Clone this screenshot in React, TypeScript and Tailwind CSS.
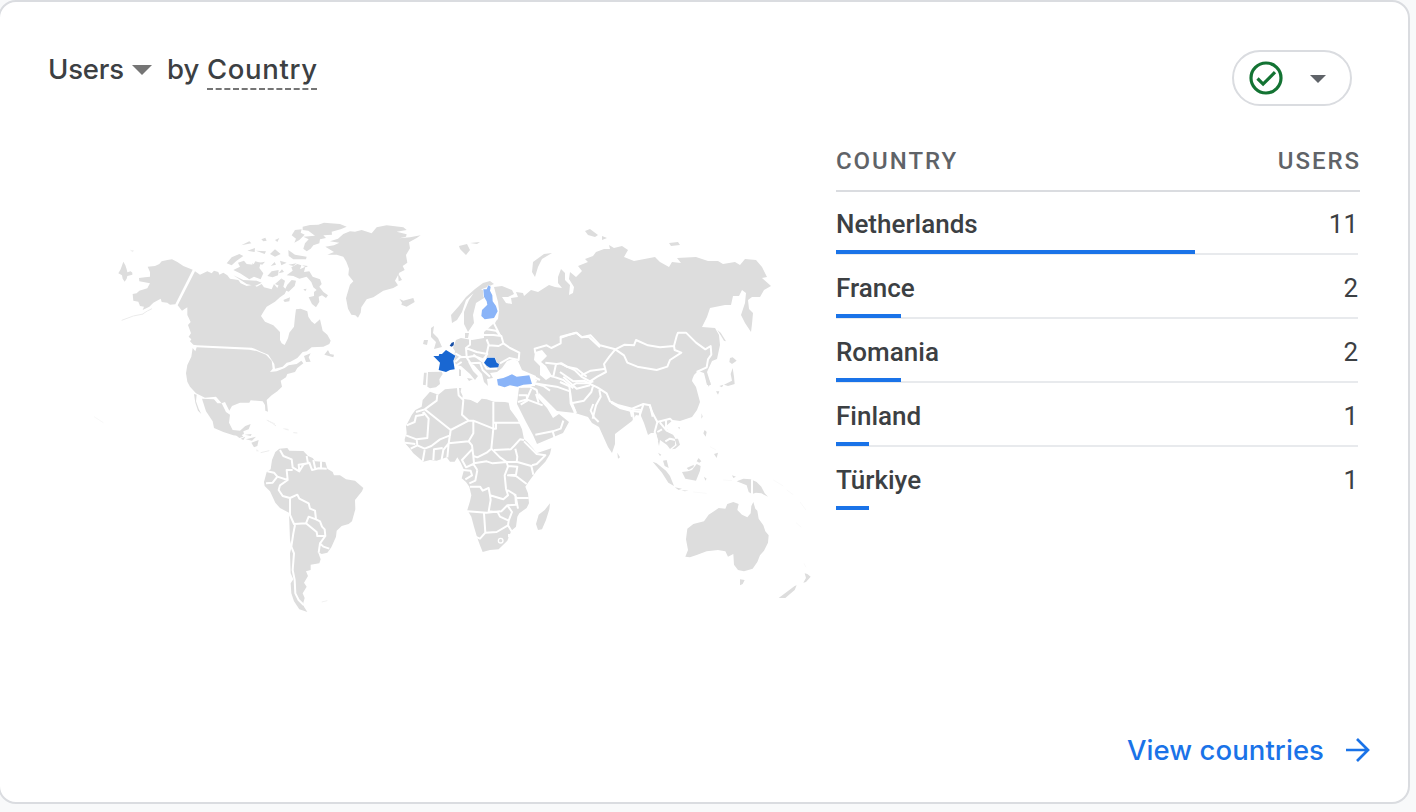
import React from "react";

const rows = [
  { country: "Netherlands", users: 11, bar: 359 },
  { country: "France", users: 2, bar: 65 },
  { country: "Romania", users: 2, bar: 65 },
  { country: "Finland", users: 1, bar: 32.5 },
  { country: "Türkiye", users: 1, bar: 32.5 },
];

const border = {
  fill: "none",
  stroke: "#fff",
  strokeWidth: 6,
  strokeLinejoin: "round" as const,
};

function NorthAmerica() {
  return (
    <>
      <g transform="translate(90 210) scale(.33333)">
        <path d="M308 179 280 168 262 156 246 148 232 150 215 154 208 162 195 168 173 170 180 186 180 200 165 202 147 204 148 214 172 218 180 220 172 235 148 242 140 250 128 252 130 272 145 275 150 288 162 290 158 300 178 290 190 278 212 266 215 276 232 278 240 284 256 283Z" />
        <path d="M95 331 130 318 160 312M158 312 172 303 186 296" fill="none" stroke="#ececec" strokeWidth="3" />
        <path d="M100 155 106 166 110 178 112 187 122 184 127 188 127 194 112 198 110 206 104 215 98 206 96 196 85 190 92 178Z" />
        <path d="M315 184 330 194 352 184 365 190 372 182 385 186 388 194 400 188 412 196 420 206 445 210 452 220 470 228 490 224 500 230 515 222 522 232 545 238 552 222 562 234 575 206 585 212 580 230 590 240 584 252 570 262 555 275 530 290 520 306 513 318 525 335 550 346 570 366 570 390 575 400 584 405 594 385 598 368 612 350 615 320 618 298 632 296 652 304 655 320 664 334 674 342 690 328 698 362 712 374 722 392 718 402 700 410 665 412 650 424 638 426 622 444 600 456 590 458 578 470 555 476 553 462 535 434 510 424 494 416 485 413 320 406 310 404 300 394 304 388 296 380 303 370 294 345 302 336 292 315 292 292 276 302 263 286Z" />
        <path d="M308 414 316 424 320 412 478 419 500 423 528 434 545 452 548 476 540 486 560 484 584 474 596 466 620 462 634 452 640 460 622 474 615 486 592 492 588 502 572 512 576 530 562 544 545 556 530 570 534 605 526 602 525 585 518 574 482 571 478 578 450 578 426 588 418 602 412 590 405 576 395 580 378 560 345 563 318 550 300 530 292 515 288 490 292 465 304 440Z" />
        <path d="M642 438 662 430 656 442 662 455 648 456ZM703 434 714 420 720 432 732 434 730 442ZM410 160 425 142 448 132 460 138 440 152 425 166ZM430 180 450 170 444 158 462 152 470 162 490 164 496 154 512 158 508 174 520 190 512 208 492 200 478 208 450 190ZM430 196 460 210 500 212 515 218 495 228 470 222Z" />
        <path d="m122 121 9 1-4 3zM12 620l28 18" stroke="#f5f5f5" strokeWidth="2" />
      </g>
      <g transform="translate(240 210) scale(.33333)">
        <path d="M188 50 210 45 235 44 252 38 300 42 320 50 302 58 275 65 276 74 250 76 258 84 240 88 238 100 220 106 212 116 200 124 190 116 195 100 206 88 190 80 225 77 205 62 188 60ZM155 76 165 60 185 58 182 68 194 74 178 90 163 98 168 86Z" />
        <path d="M256 110 282 106 298 98 270 94 294 86 310 72 330 64 345 65 365 60 395 70 410 52 440 46 490 52 500 60 470 65 500 73 498 80 478 85 510 82 542 76 530 84 507 97 510 115 498 135 502 158 488 168 494 180 478 188 465 212 474 226 460 234 430 242 400 262 380 268 364 292 362 308 354 323 346 316 334 314 324 296 318 265 324 244 330 224 340 214 325 195 327 176 319 155 310 140 290 134 262 134 282 126Z" />
        <path d="M474 190 486 210 476 214ZM478 266 490 272 506 268 520 264 524 276 500 290 484 284 486 278ZM145 120 165 134 200 140 198 148 160 148 146 138Z" />
        <path d="M140 196 158 182 154 172 172 162 184 166 180 178 196 170 192 186 208 184 218 200 240 208 245 222 238 230 250 246 264 256 258 264 246 256 236 260 238 275 228 292 216 282 206 262 222 258 222 246 230 240 220 232 214 216 200 200 178 206 160 198Z" />
        <path d="M142 224 155 210 168 212 164 228 146 245 134 240ZM82 198 95 184 116 180 114 196 98 202ZM22 122 45 114 44 126ZM90 132 105 118 122 132 105 140ZM50 160 75 155 67 164ZM4 106 28 94 34 100ZM64 88 76 83 80 92 70 94ZM48 122 78 124 74 132ZM130 270 150 262 148 274 134 276ZM92 168 104 156 108 164ZM116 190 126 178 132 186ZM105 90 118 84 112 96ZM120 152 140 158 124 166ZM190 238 200 236 196 244ZM145 164 170 160 160 168ZM186 166 204 168 198 172ZM36 160 52 168 45 190ZM105 222 125 205 124 230Z" />
      </g>
      <g transform="translate(180 380) scale(.33333)">
        <path d="M66 56 102 58 112 70 125 70 138 96 150 104 147 128 158 150 180 152 196 138 212 132 206 148 190 154 192 162 178 168 160 166 130 156 102 144 98 124 78 94Z" />
        <path d="M42 42 50 44 48 64 56 86 64 102 54 92 46 68ZM168 166 182 162 190 170 178 174ZM182 176 196 170 190 180ZM194 164 215 162 212 168ZM198 178 228 170 216 182ZM214 188 236 180 232 198 222 202ZM230 210 236 213 230 214Z" />
        <path d="M262 121 278 130 288 138M316 148 326 150M340 158 352 159M242 218 268 212" fill="none" stroke="#ededed" strokeWidth="3" />
      </g>
    </>
  );
}

function SouthAmerica() {
  return (
    <g transform="translate(240 420) scale(.33333)">
      <path d="M106 96 118 86 142 84 148 92 190 93 204 108 218 114 225 124 256 126 262 146 278 156 282 166 300 166 318 178 345 182 370 204 366 214 345 240 346 268 336 304 326 312 305 318 290 332 288 350 274 382 262 398 245 402 234 396 242 418 238 430 212 434 212 450 198 454 204 468 192 488 200 500 188 520 194 534 190 548 192 560 202 576 178 568 162 544 154 520 152 490 160 478 152 460 150 400 155 380 150 360 147 278 120 264 106 248 90 214 74 198 72 186 80 156 92 148 96 120Z" />
      <g {...border}>
        <path d="M120 90 130 108 155 118 158 142 178 154 176 134 204 130 200 108M178 154 190 134 208 128 216 150 236 145 260 146M220 120 226 148M243 124 243 146M158 150 140 150 143 180 112 170 102 158 82 154M112 170 98 188 78 190M143 180 120 196 116 210 128 228 150 234 172 224 178 236 206 250 210 266 225 272 228 298 206 290 198 310 162 312 150 285 150 234M228 298 240 304 246 320 254 328 256 348 232 348 230 336 198 310M256 348 240 370 250 380 268 386M240 370 236 398M165 315 160 340 154 380 162 400 158 450 164 480 166 520 176 540 192 556" />
      </g>
      <path d="M80 0 105 12M130 26 145 28M50 88 55 94M245 546 262 542" stroke="#f2f2f2" strokeWidth="3" fill="none" />
    </g>
  );
}

function Africa() {
  return (
    <g transform="translate(390 370) scale(.33333)">
      <path d="M114 6 155 5 158 12 148 28 150 42 138 52 120 55 112 50ZM102 8 110 8 107 46 99 44Z" />
      <path d="M120 65 145 74 165 58 205 54 214 54 212 65 218 78 216 86 242 90 262 100 275 86 290 88 312 95 345 96 356 98 360 118 382 148 396 178 402 208 412 216 430 236 440 250 484 235 480 252 466 275 440 302 416 335 406 350 414 370 417 400 410 414 388 430 382 440 378 470 364 482 352 512 326 538 300 540 278 546 270 526 262 504 252 470 244 440 232 420 240 394 244 376 238 350 228 336 215 325 222 300 212 278 202 262 194 275 180 275 170 262 140 272 120 270 100 275 70 250 60 236 45 220 44 208 50 190 48 168 65 135 76 120 95 110 98 90Z" />
      <path d="M480 400 478 418 468 450 456 478 444 480 438 462 446 434 464 420Z" />
      <g {...border}>
        <path d="M142 74 140 92 104 118 78 126M204 54 206 76 220 90 216 134 236 152 182 180 104 118M100 126 100 134 78 138 74 156 50 166M100 126 116 146 112 204 80 208 48 196M236 152 250 152 310 176 310 95M250 152 250 190 236 214 176 220 182 180M312 158 390 158M318 158 318 176 310 176 304 236 290 248 262 262 250 258 246 226 236 214M182 180 180 196 150 208 124 228 104 236 82 226 80 208M45 218 76 222M62 236 82 226M98 274 104 240M130 270 132 238 158 234M155 268 160 240 176 220M172 262 176 220M246 238 216 270 228 292 250 282 262 300M250 258 252 280 290 274 308 280 350 276M304 236 330 262 350 276 382 276 424 288 430 314M312 240 362 238 372 228 390 208 402 210M376 236 382 260 380 276M402 214 428 240 440 252 466 256 440 282 426 286M350 276 354 290 344 316 348 356 354 376 340 388 300 376 296 354 278 362 270 350 240 350M262 300 256 332 238 340M218 300 242 302 246 316 226 328M354 288 382 290 378 314 354 316 378 318 410 342M352 360 372 372 380 384 416 384M300 376 302 390 296 424 318 426 334 424 352 406 378 404 376 374 384 416M232 424 290 428 330 424M282 430 286 488 270 506 256 500M286 488 320 486 354 466 356 452 330 440 322 424M354 466 366 486M352 406 366 426 356 452" />
      </g>
      <circle cx="332" cy="512" r="7" fill="#ddd" stroke="#fff" strokeWidth="4" />
      <path d="M354 492h8v10h-8z" fill="#fff" />
    </g>
  );
}

function Eurasia() {
  return (
    <>
      <path d="M494 287 502 286 512 290 514 294 508 297 502 297 506 303 512 304 511 298 518 297 516 292 523 293 524 296 531 290 538 292 549 285 555 287 562 288 558 283 558 277 561 269 565 273 565 280 570 285 569 295 573 293 574 287 569 279 570 272 576 277 582 271 578 266 588 262 585 259 593 256 596 252 604 249 610 249 609 245 614 248 622 246 628 250 624 257 634 261 655 257 660 262 669 267 672 262 681 263 677 258 696 257 708 261 718 261 723 264 735 262 740 265 745 259 756 260 762 267 767 277 762 278 771 286 764 290 760 297 752 297 748 300 749 309 753 313 752 324 751 332 745 323 741 315 745 303 746 293 742 290 739 296 733 296 731 305 725 305 710 308 707 317 702 327 715 328 719 335 720 345 717 359 712 361 707 372 711 385 707 385 704 373 698 371 694 375 692 380 687 381 684 377 690 370 694 371 692 381 696 387 700 402 697 410 692 417 680 421 673 420 666 426 675 437 675 445 670 449 667 445 660 440 659 446 656 433 651 433 648 435 644 423 641 416 636 415 632 421 615 434 615 444 612 453 608 447 599 427 592 423 588 417 575 413 557 411 551 405 539 393 538 398 547 408 553 418 559 414 569 422 563 433 537 444 533 435 526 422 517 404 518 395 519 388 530 386 535 386 536 376 522 370 518 361 513 359 507 361 502 368 497 372 490 373 493 378 487 379 488 386 484 382 482 374 474 365 468 362 473 371 478 376 475 380 470 374 461 366 456 365 454 359 455 351 453 348 456 340 461 338 472 340 484 338 484 332 492 325 498 319 499 310 498 302Z" />
      <path d="M451 315 459 306 466 297 475 289 483 283 490 281 494 284 485 288 476 291 466 300 462 312 457 320 452 323ZM464 324 464 312 469 300 477 288 483 290 484 298 476 303 473 315 474 323 468 332ZM431 328 434 326 433 333 438 338 442 347 434 349 436 342 431 337ZM424 340 428 340 427 345 423 344ZM459 246 467 244 470 250 466 255 460 249ZM470 243 480 242 477 244ZM532 272 533 262 544 254 552 253 542 259 538 267 535 277ZM585 231 590 229 598 235 595 237 588 235ZM602 236 607 238 602 240ZM669 243 678 242 680 245 671 246Z" />
      <path d="M535 352 542 350 547 356 541 362 546 366 552 376 546 380 540 375 540 366 534 360Z" fill="#fff" />
      <g transform="translate(390 220) scale(.33333)" {...border}>
        <path d="M196 425 210 412 230 410 228 384 240 374 240 355M228 384 260 396 292 402 280 418 252 408 230 412M290 358 296 374 290 402M282 345 310 345 334 348 340 370 326 378 296 376M282 326 318 332 330 345M340 370 360 384 388 398 386 420 358 414 330 430M290 402 280 430 290 446 322 446M230 412 242 430 270 428 278 450 300 470M250 404 280 426M325 270 312 310 330 346M436 400 434 386 470 376 484 384 512 370 512 350 558 338 576 352 596 350 630 382M466 428 500 432 515 430 530 440 560 446 590 470M498 432 490 470 460 462M490 470 520 480 550 505M432 490 460 498 480 512M430 470 450 480M392 500 420 500 440 480M420 500 440 510 446 535M194 440 215 426M216 412 196 400" />
      </g>
      <g transform="translate(560 220) scale(.33333)" {...border}>
        <path d="M0 354 25 345 50 338 65 352 92 346 120 376 166 388 194 374 222 376 228 360 264 376 300 382 342 378 350 348 354 338 378 338 408 368 436 388 452 378 454 404 444 418 440 442 410 456M166 388 192 406 202 428 232 440 290 450 322 440 330 420 364 398 344 390 342 378M166 388 148 410 132 432 138 456 112 470 90 484 64 470 44 450 0 430M138 446 92 452 64 466M0 456 40 484 72 482 90 492 112 502 140 520 150 544 176 556 216 566 250 552 270 556 278 590M0 486 30 500 48 490 82 490 100 484M28 500 34 544 48 580M34 550 72 542 94 516 100 494M118 510 122 530 108 556 98 596M155 546 184 562 212 572 216 590M214 566 244 570" />
      </g>
      <g transform="translate(560 380) scale(.33333)" {...border}>
        <path d="M34 70 46 94 42 102M100 72 92 92 102 112 116 126M154 68 180 84 218 94 222 122M216 92 240 96 240 110M250 74 238 110M268 74 278 100 292 126 284 156 292 184M292 126 330 116 342 128M300 128 320 152 342 162 352 180M306 148 292 156M316 184 330 176 346 180M318 120 318 142 344 160" />
      </g>
      <g transform="translate(390 370) scale(.33333)" {...border}>
        <path d="M386 76 410 76 412 92 392 104M384 96 410 88 458 106M410 88 424 56M438 72 446 98M436 194 488 184 496 210M488 184 512 176 520 152M434 40 460 44 500 50 540 64 542 100 554 126M520 20 560 56 600 46" />
      </g>
      <g transform="translate(560 220) scale(.33333)">
        <path d="M472 330 482 338 498 364 492 362 482 346ZM510 414 518 412 530 422 516 432 508 426ZM518 444 522 470 524 492 504 498 492 494 516 482 512 462ZM478 498 490 494 486 502ZM468 514 478 514 474 524ZM444 474 452 490 446 500 440 486ZM425 580 428 590 424 596Z" />
      </g>
      <g transform="translate(560 380) scale(.33333)">
        <path d="M434 150 440 156 437 170 430 160ZM354 142 360 142 358 148ZM172 218 180 232 174 236ZM278 245 290 250 318 272 330 288 342 318 325 308 306 278ZM309 242 320 240 326 264 314 258ZM344 322 366 326 356 330ZM364 330 386 332 374 334ZM366 276 384 274 396 270 410 252 422 258 420 272 408 302 376 296ZM380 264 402 254 400 262 386 270ZM410 244 416 234 424 244 418 248ZM462 222 474 218 470 234ZM432 290 440 296 436 302ZM516 286 528 290 520 294ZM294 218 304 224 300 228ZM344 176 354 176 360 194 346 206 336 208 350 196Z" />
        <path d="M530 304 550 296 572 298 590 306 604 320 614 340 624 350 604 340 588 338 576 342 566 336 560 316Z" />
        <path d="M576 298v46" {...border} />
        <path d="M382 446 400 432 432 424 446 404 462 394 476 384 496 386 502 372 520 366 536 372 532 390 546 404 562 412 572 400 574 378 580 366 586 386 592 392 596 416 610 436 616 454 626 466 624 488 612 512 600 526 592 546 578 566 552 574 534 570 522 554 520 522 504 530 496 514 474 510 440 514 412 524 390 532 376 530 384 510 378 478Z" />
        <path d="M540 598 554 600 548 612 540 616ZM656 654 680 636 704 618 710 616 704 630 676 654ZM734 580 742 582 752 590 738 606 730 608 738 594Z" />
        <path d="M640 300 670 318M680 330 700 344M720 366 738 390M708 428 724 442M732 550 738 562M400 336 440 340M490 300 516 302M450 200 468 210" fill="none" stroke="#fafafa" strokeWidth="3" />
      </g>
      <path d="M465 333 469 333 468 338 465 338ZM467 378 473 379 469 381ZM459 369 461 370 461 376 459 376Z" />
    </>
  );
}

function WorldMap() {
  return (
    <svg viewBox="90 210 740 420" className="h-[420px] w-[740px]" fill="#ddd" aria-label="Users by country">
      <NorthAmerica />
      <SouthAmerica />
      <Africa />
      <Eurasia />
      <g transform="translate(390 220) scale(.33333)" stroke="#fff" strokeWidth="3" paintOrder="stroke">
        <path fill="#8ab4f8" d="M280 208 290 208 295 196 302 200 300 212 307 226 308 244 318 258 323 274 312 294 284 298 274 288 276 270 292 254 290 244 282 230Z" />
        <path fill="#1967d2" d="M130 408 146 408 148 402 156 402 168 390 196 407 190 422 194 448 180 450 168 456 146 450 150 428Z" />
        <path fill="#174ea6" strokeWidth="1" d="M179 377 185 368 192 366 191 376 185 380Z" />
        <path fill="#1967d2" strokeWidth="2" d="M282 428 292 413 314 413 320 428 327 432 325 442 300 443 290 437Z" />
        <path fill="#8ab4f8" d="M321 478 340 474 366 463 380 470 418 466 426 492 400 494 382 500 360 496 344 502 324 496Z" />
      </g>
    </svg>
  );
}

export default function App() {
  return (
    <div className="h-[812px] w-[1416px] overflow-hidden bg-[#f8f9fa] font-[Roboto,sans-serif] text-[#3c4043]">
      <section className="-ml-0.5 flex h-[804px] w-[1412px] flex-col rounded-[18px] border-2 border-[#dadce0] bg-white">
        <header className="flex h-[134px] items-start justify-between pr-14 pl-12">
          <h2 className="flex items-start pt-[45px] font-[Inter,sans-serif] text-[27.5px] leading-[44px] font-[450]">
            <span className="w-[75px] tracking-[-0.2px]">Users</span>
            <svg viewBox="0 0 20 10" className="mt-[18px] ml-[9px] h-[10px] w-5" fill="#757575">
              <path d="M0 0h20L10 10z" />
            </svg>
            <span className="ml-[15px] w-10">by</span>
            <span className="flex w-[110px] flex-col">
              <span className="h-[41px] tracking-[0.65px]">Country</span>
              <svg viewBox="0 0 110 2" className="h-0.5 w-[110px]">
                <path d="M0 1h110" stroke="#757575" strokeWidth="2" strokeDasharray="6 2.67" />
              </svg>
            </span>
          </h2>
          <button className="mt-12 flex h-14 w-[120px] items-center rounded-full border-2 border-[#dadce0] pl-[15px]">
            <svg viewBox="0 0 34 34" className="size-[34px]" fill="none" stroke="#137333" strokeWidth="3.2">
              <circle cx="17" cy="17" r="15" />
              <path d="m8.5 17.5 5.6 5.6L26 11.2" />
            </svg>
            <svg viewBox="0 0 16 8" className="mt-px ml-[27px] h-2 w-4" fill="#5f6368">
              <path d="M0 0h16L8 8z" />
            </svg>
          </button>
        </header>

        <div className="flex h-[560px] pr-12">
          <div className="w-[836px] shrink-0 pt-[74px] pl-[90px]">
            <WorldMap />
          </div>
          <div className="w-[524px]">
            <div className="flex h-14 items-center justify-between border-b-2 border-[#dadce0] pb-1 text-2xl font-medium tracking-[1.95px] text-[#5f6368]">
              <span>COUNTRY</span>
              <span className="-mr-px">USERS</span>
            </div>
            {rows.map((row, index) => (
              <div key={row.country} className="mr-0.5 h-16">
                <div className="flex h-[58px] items-center justify-between pt-1.5 text-[26px]">
                  <span className="font-medium">{row.country}</span>
                  <span>{row.users}</span>
                </div>
                <div className={index < 4 ? "h-[5px] border-b-2 border-[#e8eaed]" : "h-[5px]"}>
                  <div className="h-1 bg-[#1a73e8]" style={{ width: row.bar }} />
                </div>
              </div>
            ))}
          </div>
        </div>

        <footer className="flex items-center justify-end pt-8 pr-[38px] font-[Inter,sans-serif] text-[27.5px] leading-[44px] font-medium text-[#1a73e8]">
          <span className="tracking-[0.07px]">View countries</span>
          <svg viewBox="0 0 24 24" className="ml-[22px] size-6" fill="none" stroke="#1a73e8" strokeWidth="2.7">
            <path d="M0 12h22M11 1l11 11-11 11" />
          </svg>
        </footer>
      </section>
    </div>
  );
}
